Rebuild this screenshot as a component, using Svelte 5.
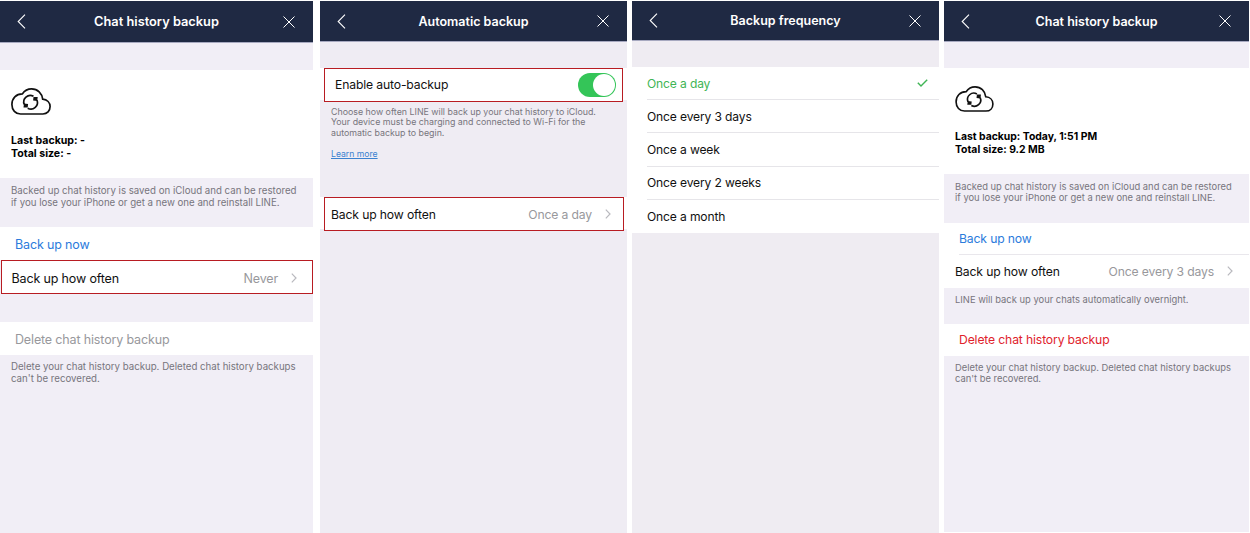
<script>
const frequencies = ['Once a day', 'Once every 3 days', 'Once a week', 'Once every 2 weeks', 'Once a month']
let selected = $state('Once a day')
let autoBackup = $state(true)
</script>

{#snippet header(title)}
    <header>
        <svg class="back" viewBox="0 0 9 15"><path d="M8 .7 1.200 7.500 8 14.300" /></svg>
        <h1>{title}</h1>
        <svg class="close" viewBox="0 0 12 12"><path d="M.5.5l11 11M11.5.5l-11 11" /></svg>
    </header>
{/snippet}

{#snippet cloud()}
    <svg class="cloud" viewBox="0 0 40 27">
        <path d="M9.6 26C4.500 26 .9 22 .9 16.500.9 10.300 5.200 5.900 11.300 5.900 13.600 2.600 16.800.900 20.600.900c6.100 0 10.400 4.300 11.100 10.300 4.400.4 7.400 3.400 7.400 7.400 0 4.400-3 7.400-7.200 7.400z" />
        <path d="M13.300 16.500A6.500 6.500 0 0 1 22.500 8.300M25.900 12A6.500 6.500 0 0 1 16.700 20.200" />
        <path class="fill" d="M26.700 8.900l-.5 4.100-4.100-.6.400-3.500zM12.500 19.600l.5-4.100 4.100.6-.4 3.500z" />
    </svg>
{/snippet}

{#snippet chevron()}
    <svg class="chevron" viewBox="0 0 6 10"><path d="M.8.7 5 5 .8 9.300" /></svg>
{/snippet}

<main>
    <section class="panel first">
        {@render header('Chat history backup')}
        <div class="summary">
            {@render cloud()}
            <p>Last backup: -<br>Total size: -</p>
        </div>
        <p class="note saved">Backed up chat history is saved on iCloud and can be restored<br>if you lose your iPhone or get a new one and reinstall LINE.</p>
        <div class="row action blue">Back up now</div>
        <div class="row marked">
            <span>Back up how often</span>
            <span class="value">Never</span>
            {@render chevron()}
        </div>
        <div class="row action delete disabled">Delete chat history backup</div>
        <p class="note">Delete your chat history backup. Deleted chat history backups<br>can't be recovered.</p>
    </section>

    <section class="panel second">
        {@render header('Automatic backup')}
        <div class="band">
            <div class="row enable marked">
                <span>Enable auto-backup</span>
                <button class="switch" class:on={autoBackup} aria-label="Enable auto-backup" onclick={() => autoBackup = !autoBackup}><i></i></button>
            </div>
        </div>
        <p class="note choose">
            Choose how often LINE will back up your chat history to iCloud.<br>
            Your device must be charging and connected to Wi-Fi for the<br>
            automatic backup to begin.<br><br>
            <a href="#more">Learn more</a>
        </p>
        <div class="band">
            <div class="row often marked">
                <span>Back up how often</span>
                <span class="value">{selected}</span>
                {@render chevron()}
            </div>
        </div>
    </section>

    <section class="panel third">
        {@render header('Backup frequency')}
        <ul>
            {#each frequencies as item}
                <li class:selected={item === selected}>
                    <span>{item}</span>
                    {#if item === selected}
                        <svg class="check" viewBox="0 0 11 8"><path d="M.8 3.800 4 7 10.200.800" /></svg>
                    {/if}
                </li>
            {/each}
        </ul>
    </section>

    <section class="panel fourth">
        {@render header('Chat history backup')}
        <div class="summary">
            {@render cloud()}
            <p>Last backup: Today, 1:51 PM<br>Total size: 9.2 MB</p>
        </div>
        <p class="note saved">Backed up chat history is saved on iCloud and can be restored<br>if you lose your iPhone or get a new one and reinstall LINE.</p>
        <div class="row action blue lined">Back up now</div>
        <div class="row">
            <span>Back up how often</span>
            <span class="value">Once every 3 days</span>
            {@render chevron()}
        </div>
        <p class="note overnight">LINE will back up your chats automatically overnight.</p>
        <div class="row action delete red">Delete chat history backup</div>
        <p class="note">Delete your chat history backup. Deleted chat history backups<br>can't be recovered.</p>
    </section>
</main>

<style>
:global(body) {
    background: #fff;
    font-family: Inter, "Liberation Sans", sans-serif;
}
main {
    display: grid;
    grid-template-columns: 320px 312px 312px 305px;
    height: 532px;
    padding-top: 1px;
    overflow: hidden;
}
.panel {
    width: 307px;
    background: #f1eef6;
    color: #111;
    font-size: 12.2px;
    letter-spacing: -.15px;
}
.first {
    width: 313px;
    font-size: 12.5px;
}
.second {
    background: #efecf3;
}
.third {
    background: #efecf2;
    font-size: 12.1px;
}
.fourth {
    width: 305px;
    height: 531px;
}
svg {
    display: block;
    flex: none;
    fill: none;
    stroke: currentColor;
}
header {
    display: flex;
    align-items: center;
    height: 40px;
    padding: 0 18px 0 17px;
    border-bottom: 1px solid #a7a9c0;
    background: #1f2943 padding-box;
    color: #fff;
}
.first header {
    height: 41px;
    padding: 0 18px 0 17px;
}
.third header {
    height: 39px;
}
h1 {
    flex: 1;
    margin: 0;
    padding-left: 4px;
    text-align: center;
    font-size: 12.5px;
    font-weight: 600;
    letter-spacing: 0;
}
.first h1 {
    font-size: 12.8px;
}
.back {
    width: 9px;
    height: 15px;
    stroke-width: 1.1;
}
.close {
    width: 12px;
    height: 12px;
    stroke-width: 1;
}
.summary {
    box-sizing: border-box;
    height: 106px;
    margin-top: 26px;
    padding: 18px 11px 0;
    background: #fff;
}
.first .summary {
    height: 108px;
    margin-top: 27px;
}
.summary p {
    margin: 18px 0 0;
    color: #000;
    font-size: 10.400px;
    font-weight: 700;
    line-height: 13.400px;
    letter-spacing: 0;
}
.first .summary p {
    margin-top: 19px;
    font-size: 10.600px;
}
.cloud {
    width: 39px;
    height: 26px;
    color: #111;
    stroke-width: 1.7;
}
.first .cloud {
    width: 40px;
    height: 27px;
}
.cloud .fill {
    fill: currentColor;
    stroke: none;
}
.note {
    margin: 0;
    padding: 6px 11px 0;
    color: #77757d;
    font-size: 9.400px;
    line-height: 11.800px;
    letter-spacing: 0;
    white-space: nowrap;
}
.first .note {
    font-size: 9.680px;
}
.saved {
    box-sizing: border-box;
    height: 48.500px;
}
.first .saved {
    height: 49px;
    padding-top: 7px;
}
.row {
    display: flex;
    align-items: center;
    box-sizing: border-box;
    height: 32.500px;
    padding: 0 16px 0 11px;
    background: #fff;
}
.first .row {
    height: 33px;
    padding-top: 2px;
}
.value {
    margin-left: auto;
    margin-right: 13px;
    color: #98989c;
}
.chevron {
    width: 6px;
    height: 10px;
    color: #b9b9be;
    stroke-width: 1.2;
}
.action {
    padding-left: 15px;
}
.blue {
    color: #2b7bdc;
}
.disabled {
    color: #98989c;
}
.red {
    color: #e0222c;
}
.lined {
    background: linear-gradient(#e9e7ec, #e9e7ec) 15px 100% / 100% 1px no-repeat #fff;
}
.marked {
    outline: 1px solid #b81c22;
    outline-offset: -1px;
}
.first .marked {
    height: 34px;
    margin-left: 1px;
    padding: 2px 16px 0 10.500px;
}
.first .delete {
    margin-top: 28px;
}
.band {
    height: 32px;
    background: #fff;
}
header + .band {
    margin-top: 26px;
}
.enable {
    height: 34px;
    margin: 0 4px;
    padding: 0 7px 0 11px;
}
.enable span {
    padding-bottom: 2px;
}
.switch {
    display: flex;
    width: 38px;
    height: 24px;
    margin-left: auto;
    padding: 1px;
    border: 0;
    border-radius: 12px;
    background: #d9d9de;
}
.switch.on {
    justify-content: flex-end;
    background: #34c558;
}
.switch i {
    width: 22px;
    height: 22px;
    border-radius: 50%;
    background: #fff;
}
.choose {
    box-sizing: border-box;
    height: 97px;
    padding-top: 6.500px;
    font-size: 8.830px;
    line-height: 10.600px;
}
.choose a {
    color: #3b82d0;
    font-size: 8.650px;
}
.often {
    height: 34px;
    margin: 0 3px 0 4px;
    padding: 0 13px 0 7px;
}
ul {
    margin: 26px 0 0;
    padding: 0 0 0 15px;
    list-style: none;
    background: #fff;
}
li {
    display: flex;
    align-items: center;
    justify-content: space-between;
    box-sizing: border-box;
    height: 33.200px;
    padding-right: 11px;
    border-bottom: 1px solid #e6e5e9;
}
li:last-child {
    border-bottom: 0;
}
.selected {
    color: #3fb555;
}
.check {
    width: 11px;
    height: 8px;
    stroke-width: 1.4;
}
.overnight {
    box-sizing: border-box;
    height: 36px;
}
.fourth .saved {
    padding-top: 6.500px;
}
.fourth .delete {
    height: 32px;
}
</style>
